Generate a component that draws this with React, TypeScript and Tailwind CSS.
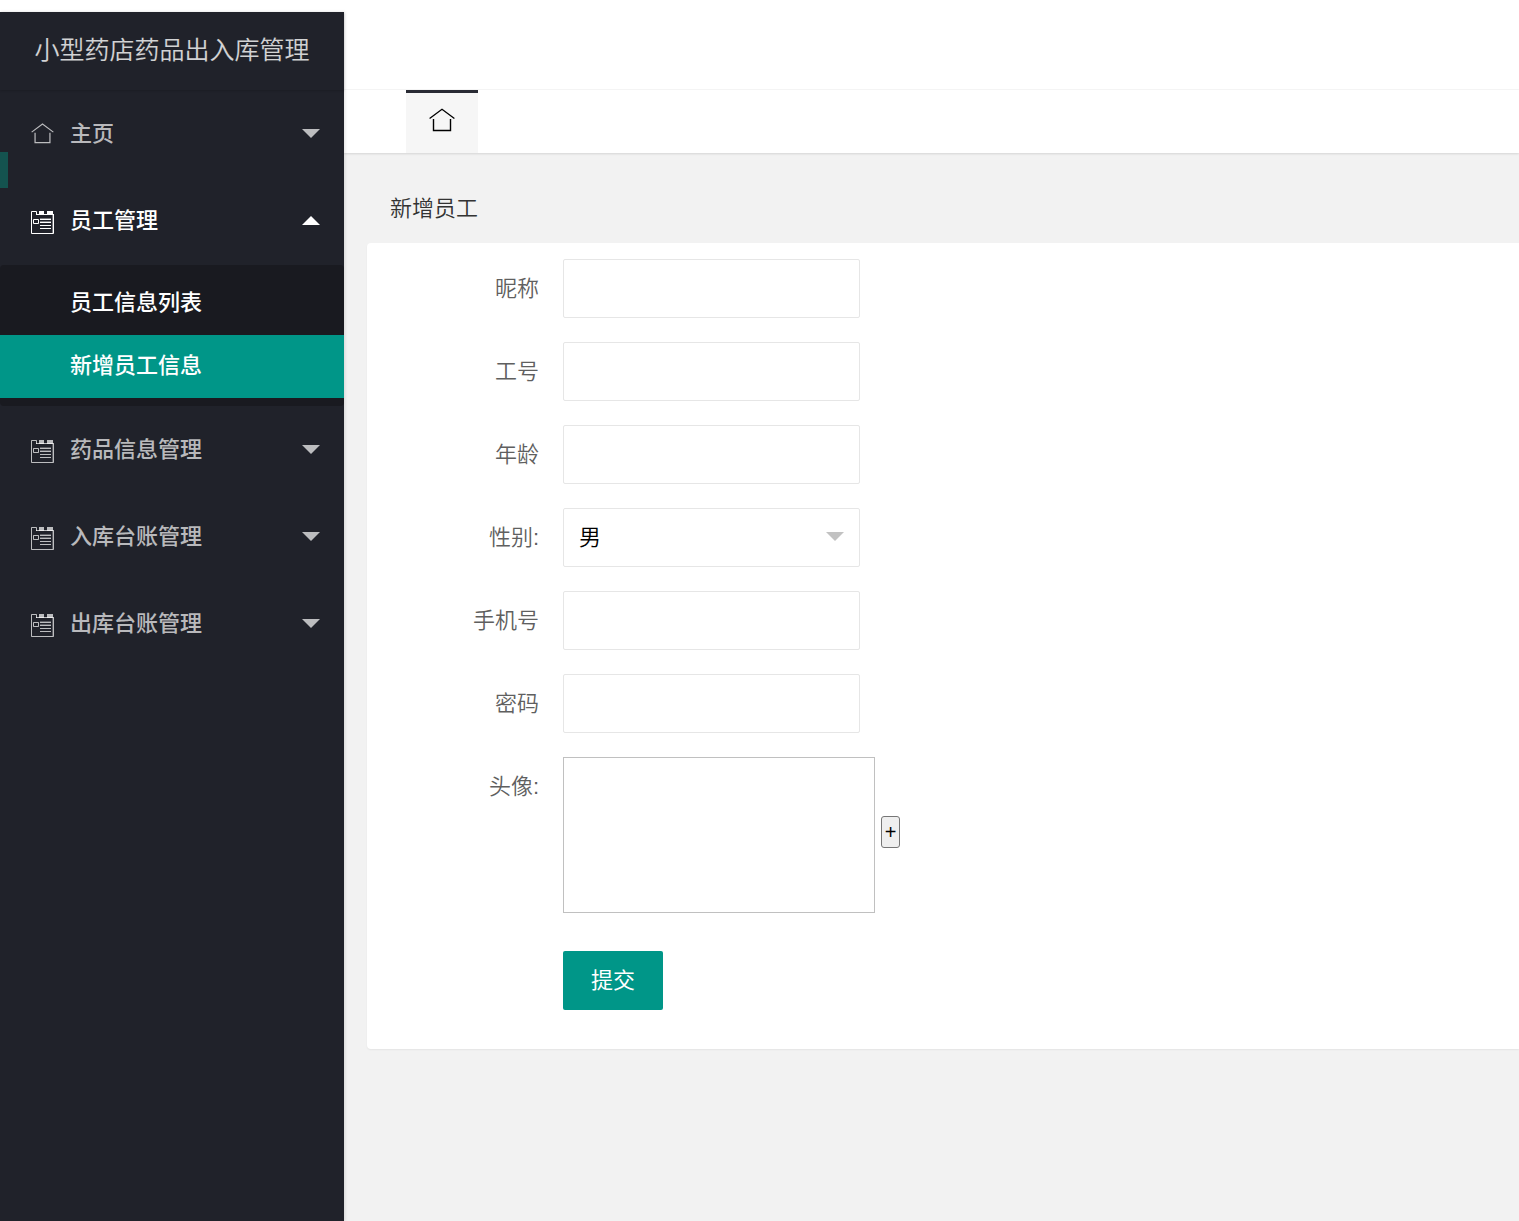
import React, { useState } from 'react';

interface MenuItem {
  title: string;
  icon: 'home' | 'form';
  children?: string[];
}

interface Field {
  name: string;
  label: string;
  type: 'text' | 'password' | 'select';
}

const menu: MenuItem[] = [
  { title: '主页', icon: 'home' },
  { title: '员工管理', icon: 'form', children: ['员工信息列表', '新增员工信息'] },
  { title: '药品信息管理', icon: 'form' },
  { title: '入库台账管理', icon: 'form' },
  { title: '出库台账管理', icon: 'form' },
];

const fields: Field[] = [
  { name: 'nickname', label: '昵称', type: 'text' },
  { name: 'jobNo', label: '工号', type: 'text' },
  { name: 'age', label: '年龄', type: 'text' },
  { name: 'sex', label: '性别:', type: 'select' },
  { name: 'phone', label: '手机号', type: 'text' },
  { name: 'password', label: '密码', type: 'password' },
];

function HomeIcon({ className }: { className: string }) {
  return (
    <svg viewBox="0 0 26 24" fill="none" stroke="currentColor" className={className}>
      <path d="M0.6 10.4 13 1.2l12.4 9.2" strokeWidth="1.3" />
      <path d="M4.5 11v11.5h17V11" strokeWidth="1.4" />
    </svg>
  );
}

function FormIcon({ className }: { className: string }) {
  return (
    <svg viewBox="0 0 23 23" fill="none" stroke="currentColor" className={className}>
      <path d="M5.5 4V.5h-5v22h22V4M5 3.5h18" />
      <path d="M21.5 4v18" strokeOpacity="0.4" />
      <path d="M8 0h5v4H8zM16 0h6v4h-6z" fill="currentColor" stroke="none" />
      <path d="M2.5 8.5h5v4h-5z" />
      <path d="M9 8.5h11M9 11.5h11M9 14.5h11M9 17.5h11" />
      <path d="M9 7.5h11M9 10.5h11" strokeOpacity="0.4" />
    </svg>
  );
}

function Caret({ up, className }: { up?: boolean; className: string }) {
  return (
    <svg viewBox="0 0 18 9" fill="currentColor" className={className}>
      <path d={up ? 'M0 9 9 0l9 9z' : 'M0 0h18L9 9z'} />
    </svg>
  );
}

function Sidebar() {
  const [open, setOpen] = useState('员工管理');
  const [active, setActive] = useState('新增员工信息');

  return (
    <aside className="relative z-10 w-[344px] shrink-0 bg-[#20222a] shadow-[1px_0_3px_rgba(0,0,0,0.12)]">
      <h1 className="flex h-[78px] items-center justify-center text-[25px] font-[350] text-white/80 shadow-[0_1px_2px_rgba(0,0,0,0.15)]">
        小型药店药品出入库管理
      </h1>
      <span className="absolute left-0 top-[140px] h-9 w-2 bg-[#14534f]" />
      <nav>
        {menu.map((item) => {
          const isOpen = open === item.title;
          return (
            <div key={item.title}>
              <button
                type="button"
                onClick={() => setOpen(isOpen ? '' : item.title)}
                className={`flex h-[87px] w-full items-center pl-[31px] pr-6 text-left text-[22px] font-medium ${
                  isOpen ? 'text-white' : 'text-white/70'
                }`}
              >
                {item.icon === 'home' ? (
                  <HomeIcon className="h-[21px] w-[23px]" />
                ) : (
                  <FormIcon className="mt-1 size-[23px]" />
                )}
                <span className="ml-4 flex-1">{item.title}</span>
                <Caret up={isOpen} className="h-[9px] w-[18px]" />
              </button>
              {isOpen && item.children && (
                <div className="mt-px rounded-sm bg-[#191a20] pb-2 pt-[7px]">
                  {item.children.map((child) => (
                    <a
                      key={child}
                      href="#"
                      onClick={() => setActive(child)}
                      className={`flex h-[63px] items-center pb-0.5 pl-[70px] text-[22px] font-medium text-white ${
                        active === child ? 'bg-[#009688]' : ''
                      }`}
                    >
                      {child}
                    </a>
                  ))}
                </div>
              )}
            </div>
          );
        })}
      </nav>
    </aside>
  );
}

function EmployeeForm() {
  return (
    <form
      onSubmit={(e) => e.preventDefault()}
      className="flex flex-col gap-6 rounded-l-sm bg-white pb-[39px] pt-4 text-[22px] font-[350] text-[#5f5f5f] shadow-[0_1px_2px_rgba(0,0,0,0.06)]"
    >
      {fields.map((field) => (
        <div key={field.name} className="flex h-[59px] items-center">
          <label htmlFor={field.name} className="w-[172px] text-right">
            {field.label}
          </label>
          {field.type === 'select' ? (
            <div className="relative ml-6 h-full w-[297px]">
              <select
                id={field.name}
                className="h-full w-full appearance-none rounded-xs border border-[#e6e6e6] bg-white pl-[15px] text-black outline-none"
              >
                <option>男</option>
                <option>女</option>
              </select>
              <Caret className="pointer-events-none absolute right-4 top-6 h-[9px] w-[18px] text-[#c2c2c2]" />
            </div>
          ) : (
            <input
              id={field.name}
              type={field.type}
              className="ml-6 h-full w-[297px] rounded-xs border border-[#e6e6e6] bg-white px-[15px] text-black outline-none"
            />
          )}
        </div>
      ))}
      <div className="flex">
        <label htmlFor="avatar" className="flex h-[59px] w-[172px] items-center justify-end">
          头像:
        </label>
        <div className="ml-6 flex items-center">
          <div className="h-[156px] w-[312px] border border-[#c0c0c0]" />
          <button
            id="avatar"
            type="button"
            className="mb-1.5 ml-1.5 h-8 w-[19px] rounded-[3px] border border-[#767676] bg-[#efefef] text-[20px] leading-7 font-normal text-black"
          >
            +
          </button>
        </div>
      </div>
      <button
        type="submit"
        className="ml-[196px] mt-[14px] h-[59px] w-[100px] rounded-xs bg-[#009688] font-normal text-white"
      >
        提交
      </button>
    </form>
  );
}

function App() {
  return (
    <div className="flex min-h-screen bg-white pt-3 font-['Liberation_Sans','Noto_Sans_CJK_SC',sans-serif]">
      <Sidebar />
      <div className="flex min-w-0 flex-1 flex-col">
        <header className="h-[78px] border-b border-[#f6f6f6]" />
        <div className="z-[1] flex h-[63px] bg-white pl-[62px] shadow-[0_1px_2px_rgba(0,0,0,0.12)]">
          <a
            href="#"
            aria-label="主页"
            className="flex w-[72px] justify-center border-t-[3px] border-[#292b34] bg-[#f6f6f6] pt-[15px] text-black"
          >
            <HomeIcon className="h-6 w-[26px]" />
          </a>
        </div>
        <main className="flex-1 bg-[#f2f2f2] pl-[23px]">
          <h2 className="flex h-[90px] items-center pl-[23px] pt-5 text-[22px] font-[350] text-[#333]">
            新增员工
          </h2>
          <EmployeeForm />
        </main>
      </div>
    </div>
  );
}

export default App;
